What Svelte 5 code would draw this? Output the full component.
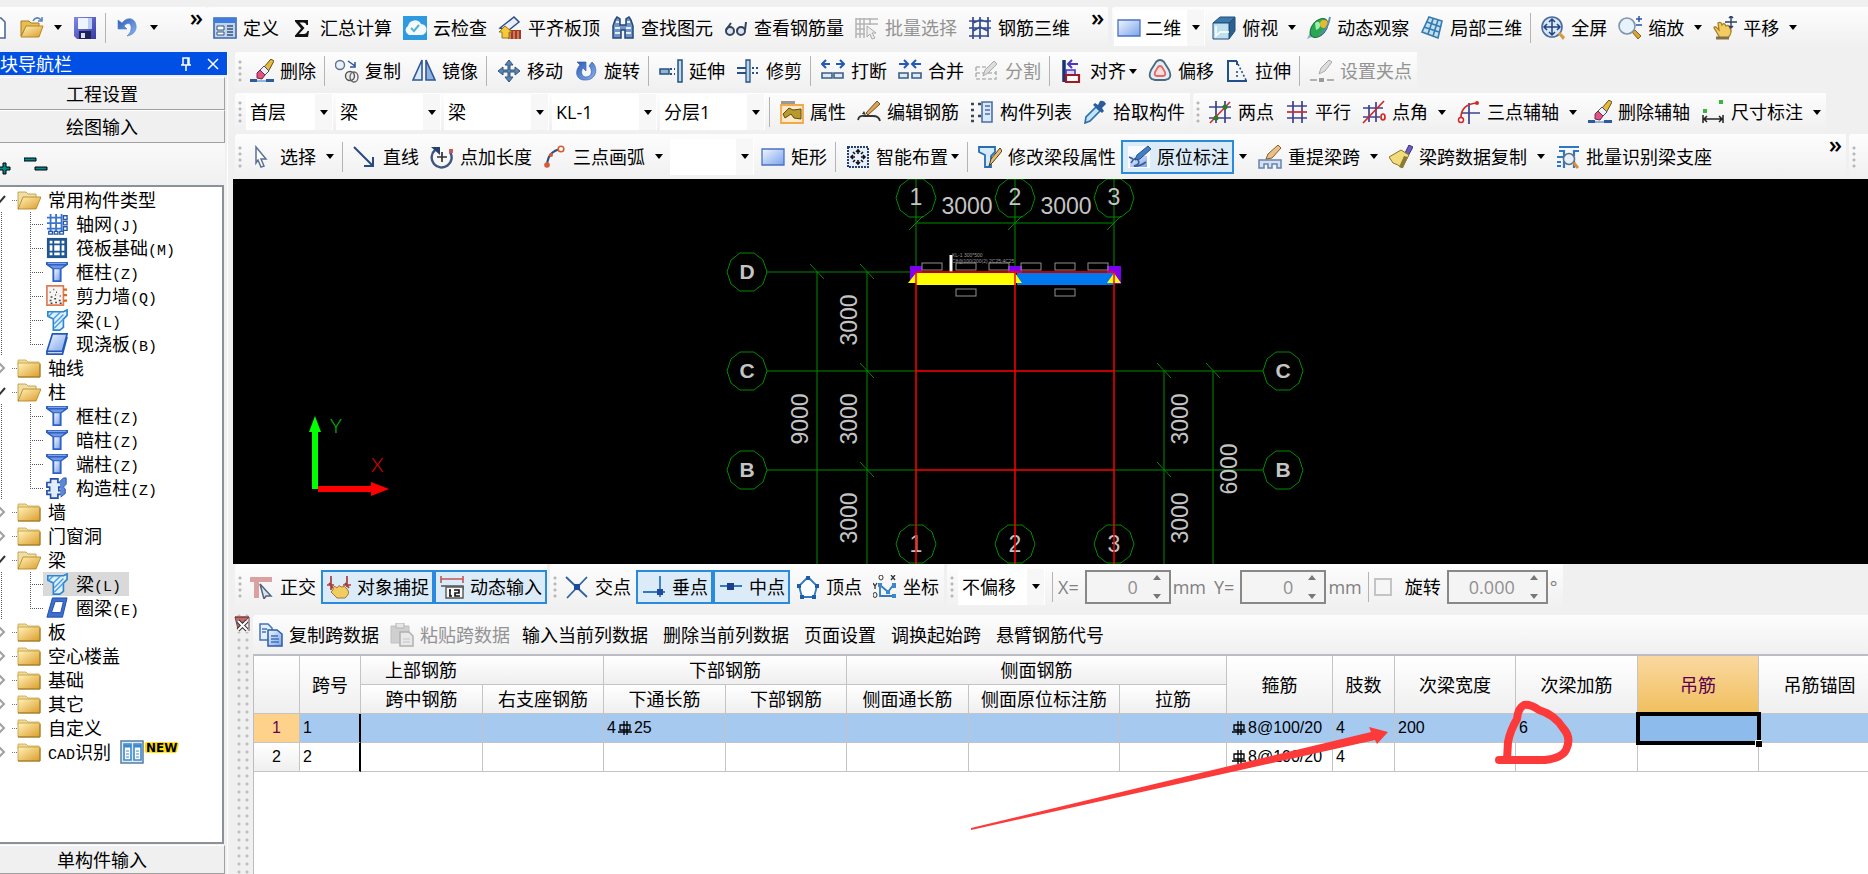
<script>
  // icons are drawn on a 24x24 board, keyed by name
  const icons = {
    doc: '<path d="M5 2h11l4 4v16H5z" fill="#fff" stroke="#4a6a9a" stroke-width="1.6"/>',
    open: '<path d="M1 5h8l2 2h8v4H6L1 20z" fill="#e8bd55" stroke="#a87a1c"/><path d="M6 10h17l-4 11H1z" fill="url(#gold)" stroke="#b8861f"/><path d="M13 5c2-4 6-4 8-1m1-3v4h-4" fill="none" stroke="#5c86b8" stroke-width="1.6"/>',
    save: '<path d="M1 1h22v22H4l-3-3z" fill="url(#violet)"/><path d="M5 2h14v11H5z" fill="#eef4ff"/><path d="M15 2h4v11h-4z" fill="#b9cdf2"/><path d="M6 15h12v8H6z" fill="#1f2356"/><path d="M8 17h4v5H8z" fill="#d8dcf0"/>',
    undo: '<path d="M2 4v9h9l-3-3c4-5 8-2 7 3 0 3-2 5-4 7 6-1 10-5 9-11C19 2 11 0 6 7z" fill="url(#blue)" stroke="#4a7fd0" stroke-width=".6"/>',
    define: '<path d="M1 2h22v20H1z" fill="#c3d3e8" stroke="#3a68ad" stroke-width="1.6"/><path d="M1 2h22v5H1z" fill="#3f7ce0"/><path d="M4 10h7v4H4zm0 6h7v3H4z" fill="#fff" stroke="#31557f"/><path d="M14 10h6m-6 3h6m-6 3h6m-6 3h6" stroke="#31557f" stroke-width="1.4"/>',
    sum: '<path d="M5 4h13v5h-1.500q-.5-2.500-3-2.500h-4l5 5.500-5.500 6h5q2.500 0 3.500-3H19l-1 6H5v-1.500L11 12.500 5 5.500z" fill="#111"/>',
    cloud: '<path d="M0 0h24v24H0z" fill="#2f9ae0"/><path d="M6 19a5 5 0 0 1-1-9 7 7 0 0 1 13-2 5.500 5.500 0 0 1 0 11z" fill="#f2fafc"/><path d="M8 12l3 3 5-6" fill="none" stroke="#59b2ce" stroke-width="2"/>',
    slabTop: '<path d="M2 12L16 1l5 5-10 8z" fill="#e8eef8" stroke="#2d4d86" stroke-width="1.500"/><path d="M10 14h13v9H10z" fill="#a23a22"/><path d="M12 15v8m4-8v8m4-8v8" stroke="#f3b8a0"/><path d="M7 10l7 6h-3v6H4v-6H1z" fill="#f5c93c" stroke="#9a7413"/>',
    binocular: '<path d="M2 10l2-6 2-3 3 2v6h6V3l3-2 2 3 2 6v12h-8v-8h-4v8H2z" fill="#6f95c6" stroke="#244677" stroke-width="1.500"/><path d="M4 12h5m6 0h5M5 6h3m8 0h3M4 17h5m6 0h5" stroke="#e4eefb" stroke-width="1.800"/>',
    glasses: '<g fill="#dce3ee" stroke="#33425d" stroke-width="2"><circle cx="6" cy="15" r="4"/><circle cx="17" cy="15" r="4"/><path d="M2 14L7 7m6 7l1-1m7 1l1-8" fill="none"/></g>',
    batch: '<path d="M1 2v20M5 2v20M9 2v20M1 3h22M1 8h22M1 13h9M1 18h9M15 2v7" fill="none" stroke="#b4b4b4" stroke-width="1.500"/><path d="M12 10l9 7h-4l3 5-3 1-2-5-3 3z" fill="#eee" stroke="#aaa"/>',
    rebar3d: '<path d="M5 1v22M12 1v22M20 1v20M1 5h22M1 12h22M1 20h20M5 7L12 4l8 2M5 15l7-4 8 4" fill="none" stroke="#334b8f" stroke-width="1.700"/>',
    rect: '<path d="M1 4h22v16H1z" fill="url(#sky)" stroke="#4a70c4" stroke-width="1.300"/>',
    cube: '<path d="M1 7L8 1h15l-6 6z" fill="#3c7aab" stroke="#1e4f7b"/><path d="M17 7l6-6v14l-6 8z" fill="#2c608f" stroke="#1e4f7b"/><path d="M1 7h16v16H1z" fill="#bfe0ef" stroke="#1e4f7b"/><path d="M4 10v10l4-4h9" fill="none" stroke="#fff" stroke-width="1.500"/>',
    orbit: '<path d="M0 23l4-9 6 5z" fill="#8fb0cc"/><ellipse cx="12" cy="12" rx="7" ry="11" transform="rotate(40 12 12)" fill="#2aa851" stroke="#14713a"/><path d="M8 7q4-3 5 1t-4 6z" fill="#9cf0ae"/><circle cx="17" cy="8" r="4" fill="#e8b92c"/><path d="M12 19q9-5 11-18" fill="none" stroke="#5c88b0" stroke-width="1.800"/>',
    local3d: '<path d="M9 1l13 4-4 17-16-6z" fill="#c2e0f4" stroke="#3579ad" stroke-width="1.600"/><path d="M7 6l14 5M4 11l15 5M13 3L8 18M18 4l-5 16" fill="none" stroke="#3579ad" stroke-width="1.600"/>',
    full: '<circle cx="11" cy="11" r="10" fill="#d7e8fb" stroke="#4c6b9c" stroke-width="1.600"/><path d="M11 3v16M3 11h16M8 6l3-3 3 3M8 16l3 3 3-3M6 8l-3 3 3 3M16 8l3 3-3 3" fill="none" stroke="#23407f" stroke-width="1.500"/><path d="M17 18l2-2 5 5-2 3z" fill="#d99a3a"/>',
    zoom: '<path d="M14 16l3-2 6 6-3 3z" fill="#d9a13a" stroke="#8a6318"/><circle cx="9" cy="10" r="8" fill="#e6f2fc" stroke="#7e94ad" stroke-width="1.600"/><path d="M18 3h6M21 0v6M18 9h6" stroke="#2c53a5" stroke-width="1.500"/>',
    pan: '<path d="M3 15q-4-5 0-4l3 3-1-7q3-2 4 2 2-3 4 1 3-2 4 2 3 4-2 10H7z" fill="#f2cb63" stroke="#a97d26" stroke-width="1.300"/><path d="M3 22h13" stroke="#857045" stroke-width="3"/><path d="M18 0v12M12 6h12M16 2l2-2 2 2M16 10l2 2 2-2" fill="none" stroke="#2c3e66" stroke-width="1.400"/>',
    erase: '<path d="M0 20h7v3H0zM16 20h8v3h-8z" fill="#2e5c98"/><path d="M7 22h9" stroke="#8fb4de" stroke-width="2"/><path d="M14 8l7-8 3 2-6 11z" fill="#e5b83e" stroke="#684d17"/><path d="M10 11l4-4 5 5-4 4z" fill="#edf1f7" stroke="#444f66"/><path d="M7 14l3-3 5 5-3 4-5-1z" fill="#df5284" stroke="#7a2444"/>',
    copy: '<circle cx="5" cy="6" r="4.500" fill="#eaf1fb" stroke="#5c7291" stroke-width="1.400"/><circle cx="15" cy="17" r="4.500" fill="#eee" stroke="#555" stroke-width="1.400"/><ellipse cx="19" cy="18" rx="4" ry="5" fill="none" stroke="#666" stroke-width="1.400"/><path d="M13 2l7 5m0-4v5h-5" fill="none" stroke="#2b50a0" stroke-width="1.500"/>',
    mirror: '<path d="M10 1v20H1z" fill="#dbe8fa" stroke="#2d5797" stroke-width="1.600"/><path d="M14 1v20h9z" fill="#8fb1df" stroke="#2d5797" stroke-width="1.600"/>',
    move: '<path d="M12 1l4 5h-3v5h5V8l5 4-5 4v-3h-5v5h3l-4 5-4-5h3v-5H6v3l-5-4 5-4v3h5V6H8z" fill="#5d84ad" stroke="#2e5580"/>',
    rotate: '<path d="M3 3h9v9l-3-3c-3 4-1 9 3 9 6 0 7-7 3-11l3-4c7 6 4 18-6 18C2 22 0 12 6 6z" fill="url(#blue)" stroke="#2c56a8" stroke-width=".6"/>',
    extend: '<path d="M1 10h9v5H1z" fill="#8fb6d9" stroke="#265180" stroke-width="1.500"/><path d="M11 10h5m-5 5h5" stroke="#265180" stroke-width="2" stroke-dasharray="2 2"/><path d="M19 1h4v22h-4z" fill="#c3daee" stroke="#265180" stroke-width="1.500"/>',
    trim: '<path d="M1 9h9m-9 5h9" stroke="#265180" stroke-width="2"/><path d="M10 1h4v22h-4z" fill="#b9d3ea" stroke="#265180" stroke-width="1.300"/><path d="M16 9h7m-7 5h7" stroke="#265180" stroke-width="2" stroke-dasharray="2 2"/>',
    split: '<path d="M1 5h8M15 5h8M5 1L1 5l4 4M19 1l4 4-4 4" fill="none" stroke="#2558b8" stroke-width="2"/><path d="M1 14h10v5H1zm12 0h9v5h-9z" fill="#dfeaf6" stroke="#3a5f86" stroke-width="1.600"/>',
    join: '<path d="M1 5h8M15 5h8M6 1l4 4-4 4M18 1l-4 4 4 4" fill="none" stroke="#2558b8" stroke-width="2"/><path d="M1 14h9v5H1zm13 0h9v5h-9z" fill="#dfeaf6" stroke="#3a5f86" stroke-width="1.600"/>',
    cut: '<path d="M1 8h12M1 8v12h20v-8M1 14h20" fill="none" stroke="#b5b5b5" stroke-width="1.600" stroke-dasharray="4 2"/><path d="M8 17l2-6 9-9 3 3-9 9z" fill="#ddd" stroke="#aaa"/>',
    align: '<path d="M4 1v22" stroke="#17366f" stroke-width="3.500"/><path d="M8 5h10M12 1L8 5l4 4" fill="none" stroke="#4838c0" stroke-width="2"/><path d="M6 11h9v5H6z" fill="#dcd6ff" stroke="#4838c0" stroke-width="1.600"/><path d="M6 16h13v7H6z" fill="#fff" stroke="#a01a26" stroke-width="2.200"/>',
    offset: '<path d="M8 3q4-4 8 0l5 8q4 9-4 10H7q-8-1-4-10z" fill="#e4edf2" stroke="#496a80" stroke-width="1.800"/><path d="M10 8q2-2 4 0l3 5q1 4-2 4H9q-3 0-2-4z" fill="#fbdada" stroke="#e06a6a" stroke-width="1.800"/>',
    stretch: '<path d="M12 2H3v20h10M12 2v4" fill="none" stroke="#204f8c" stroke-width="2"/><path d="M13 5l8 16M12 12v8" stroke="#204f8c" stroke-width="1.600" stroke-dasharray="2 2"/><path d="M12 22h10" stroke="#204f8c" stroke-width="2"/>',
    grip: '<path d="M0 21h7m10 0h7" stroke="#b0b0b0" stroke-width="2"/><path d="M9 19h5v4H9z" fill="#999"/><path d="M9 15l2-6 8-8 3 2-7 9z" fill="#ddd" stroke="#aaa"/>',
    props: '<path d="M1 1h14v4H1z" fill="#999"/><path d="M1 5h22v18H1z" fill="#ffe9c8" stroke="#f0a848" stroke-width="1.800"/><path d="M3 14l6-6 4 2 8-1v10l-7-1-3-4-6 4z" fill="#b79a2c" stroke="#5c4b12"/>',
    editBar: '<path d="M1 20q1-5 6-4h9q6 0 7 5" fill="none" stroke="#333" stroke-width="1.800"/><path d="M9 15l-4-1 2-3z" fill="#333"/><path d="M9 13L20 1l3 3-12 11z" fill="#d8a35a" stroke="#7a4c1b"/>',
    list: '<path d="M1 4h4m-4 6h4m-4 6h4m-4 5h4M8 4h3M8 16h3" stroke="#3c4858" stroke-width="2.400" stroke-dasharray="3 2"/><path d="M12 2h10v20H12z" fill="#dbe8fa" stroke="#4a6fa8" stroke-width="1.600"/><path d="M15 6h5m-5 4h5m-5 4h5" stroke="#4a6fa8" stroke-width="1.500"/>',
    pick: '<path d="M2 23l1-6L13 7l4 4-10 10z" fill="#bfe4fa" stroke="#2d6da8" stroke-width="1.600"/><path d="M10 5l2-2 3 2 2-4q4-1 6 3l-4 4 2 3-2 2z" fill="#2b5d9c"/>',
    twoPoint: '<path d="M8 1v22M17 1v22M1 7h22M1 18h22" stroke="#3d4290" stroke-width="1.700"/><path d="M2 23L22 2" stroke="#d02828" stroke-width="1.500"/><circle cx="8" cy="18" r="2.500" fill="#2e7d1c"/><circle cx="17" cy="7" r="2.500" fill="#2e7d1c"/>',
    parallel: '<path d="M8 1v22M17 1v22M2 6h20M2 18h20" stroke="#3d4290" stroke-width="1.700"/><path d="M2 12h20" stroke="#d02828" stroke-width="1.700"/>',
    angle: '<path d="M7 5v17M14 2v20M1 8h20M1 17h17" stroke="#3d4290" stroke-width="1.700"/><path d="M1 23L22 1" stroke="#d02828" stroke-width="1.700"/><ellipse cx="21" cy="17" rx="2" ry="3" fill="none" stroke="#d02828" stroke-width="1.700"/>',
    arcAxis: '<path d="M12 3v21M4 13h19" stroke="#3d4290" stroke-width="1.700"/><path d="M4 18Q4 4 20 3" fill="none" stroke="#d02828" stroke-width="1.700"/><circle cx="4" cy="20" r="2.500" fill="#fff" stroke="#d02828" stroke-width="1.500"/><circle cx="20" cy="3" r="2" fill="#d02828"/>',
    dim: '<path d="M2 9h4v4H2zM18 0h4v4h-4z" fill="#37b83c"/><path d="M2 15v8m20-8v8M2 19h20M6 16l-3 3 3 3M18 16l3 3-3 3" fill="none" stroke="#222" stroke-width="1.500"/>',
    cursor: '<path d="M6 2l10 12h-5l3 7-3 1-3-7-2 3z" fill="#fff" stroke="#5a7296" stroke-width="1.500"/>',
    line: '<path d="M1 2l19 19M20 12v9h-9" fill="none" stroke="#274b80" stroke-width="2"/>',
    pointLen: '<path d="M5 5a10 10 0 1 0 15 2" fill="none" stroke="#3d5580" stroke-width="2.400"/><path d="M1 2h9v8z" fill="#26416e"/><path d="M12 7v10M7 12h10" stroke="#333" stroke-width="1.700"/><path d="M19 4h4v4h-4z" fill="#c85a5a"/>',
    arc: '<path d="M4 20Q5 6 18 4" fill="none" stroke="#2f4f86" stroke-width="2.200"/><circle cx="4" cy="20" r="2.800" fill="#d85a32"/><circle cx="18" cy="4" r="2.800" fill="#fff" stroke="#d85a32" stroke-width="1.600"/><circle cx="8" cy="10" r="2" fill="#d85a32"/>',
    smart: '<path d="M2 2h20v20H2z" fill="#e7eefb" stroke="#26416e" stroke-width="2" stroke-dasharray="2 1"/><path d="M12 5v4m0 6v4M5 12h4m6 0h4M10 7l2-2 2 2M10 17l2 2 2-2M7 10l-2 2 2 2M17 10l2 2-2 2M7 7l2 2m8-2l-2 2M7 17l2-2m8 2l-2-2" fill="none" stroke="#111" stroke-width="1.600"/>',
    beamEdit: '<path d="M1 2h16v5l-4 4v11H7V10L1 7z" fill="#d4ebfb" stroke="#2b6cb0" stroke-width="1.800"/><path d="M11 21l2-7 9-11 2 3-9 11z" fill="#e8c070" stroke="#513b1c"/>',
    inplace: '<path d="M1 1h22v22H1z" fill="#f7fbff"/><path d="M3 11h17v11H3z" fill="url(#sky)"/><path d="M2 12l4 2m-2 4q4-7 7-3t-4 6q5 1 12-4" fill="none" stroke="#3c5d96" stroke-width="1.600"/><path d="M8 15l2-5L21 1l3 3-11 10z" fill="#457cc4" stroke="#22508c"/>',
    respan: '<path d="M1 23v-8h22v8h-4v-4h-5v4h-4v-4H6v4z" fill="#d5e1f2" stroke="#6482b0" stroke-width="1.500"/><path d="M8 14l2-5L20 0l3 3-9 10z" fill="#e7c08a" stroke="#8a5d2a"/>',
    brush: '<path d="M16 8l4-8 4 2-5 9z" fill="#6a5fc0" stroke="#37307c"/><path d="M0 12L12 5l8 5-7 13-4-3-5-2z" fill="#f0dc7a" stroke="#8c7426"/><path d="M10 22l5-11 4 1-5 11z" fill="#8a7b35"/>',
    recog: '<path d="M3 2h20M3 6h5v5M23 6h-5v5M1 12h7v11M1 17h4M18 14v9M1 21h4" fill="none" stroke="#2f77c4" stroke-width="2.200"/><circle cx="13" cy="14" r="5.500" fill="#e6f0fb" stroke="#5c6f88" stroke-width="1.500"/><path d="M16 18l3-1 4 5-2 2z" fill="#d98f35"/>',
    ortho: '<path d="M0 2h22v5H9v16H4V7H0z" fill="#dba0a0"/><path d="M10 9l11 12h-5l-2 3z" fill="#dce4ee" stroke="#51647e" stroke-width="1.500"/>',
    snap: '<path d="M4 1v14M20 1v11M0 10h7m9 0h8M2 8l4 5M18 8l4 5" stroke="#a83c3c" stroke-width="1.700"/><path d="M6 15q0-6 4-2 2-4 4-1 4-2 6 2 4 4-2 9H10l-6-6z" fill="#f0cc62" stroke="#9f7a28"/>',
    dyn: '<path d="M1 1v7m22-7v7M1 4h22" stroke="#c05858" stroke-width="1.600"/><path d="M1 11h22v4" fill="none" stroke="#555" stroke-width="1.500"/><path d="M6 12h17v11H6z" fill="#f8f8f8" stroke="#555" stroke-width="1.400"/><path d="M10 15v6m-1-6h2m-2 6h3M14 15h5v3h-4v3h5" fill="none" stroke="#111" stroke-width="1.600"/>',
    cross: '<path d="M1 2l21 20M22 2L2 23" stroke="#2d62a0" stroke-width="1.800"/><path d="M9 9h6v6H9z" fill="#1d49a0"/>',
    perp: '<path d="M18 1v21M1 17h22" stroke="#2f7ac0" stroke-width="1.800"/><path d="M15 14h6v6h-6z" fill="#1d49a0"/>',
    mid: '<path d="M1 11h22" stroke="#2f7ac0" stroke-width="2"/><path d="M8 8h7v7H8z" fill="#1d3f90"/>',
    vertex: '<path d="M12 2l9 9-3 11H6L3 11z" fill="#fff" stroke="#2f7ac0" stroke-width="1.800"/><path d="M10 1h4v4h-4zM1 9h4v4H1zm18 0h4v4h-4zM4 20h4v4H4zm12 0h4v4h-4z" fill="#1f5ca8"/>',
    coord: '<path d="M7 8v13h15M7 10l8 7 6-8" fill="none" stroke="#2f7ac0" stroke-width="1.800"/><path d="M5 8h4v4H5zm14 0h4v5h-4zM13 15h4v4h-4zM19 19h4v4h-4z" fill="#3c86cc"/><path d="M0 8l2 3 2-3M2 11v3M18 0l4 5m0-5l-4 5" fill="none" stroke="#333" stroke-width="1.300"/><ellipse cx="8" cy="2.500" rx="2" ry="2.500" fill="none" stroke="#333"/><ellipse cx="2" cy="20" rx="2" ry="2.500" fill="none" stroke="#333"/>',
    copySpan: '<path d="M1 1h8l4 4v12H1z" fill="#e4effc" stroke="#4472b8" stroke-width="1.500"/><path d="M9 7h9l5 4v12H9z" fill="url(#sky)" stroke="#2c5ba8" stroke-width="1.500"/><path d="M12 13h7m-7 3h8m-8 3h8M3 6h5M3 9h4" stroke="#4472b8" stroke-width="1.300"/>',
    pasteSpan: '<path d="M1 3h18v17H1z" fill="#cfcfcf" stroke="#c0c0c0"/><path d="M6 0h8v5H6z" fill="#e6e6e6" stroke="#b4b4b4"/><path d="M10 9h9l4 4v10H10z" fill="#e8e8e8" stroke="#b0b0b0" stroke-width="1.500"/><path d="M13 16h7m-7 3h7" stroke="#c4c4c4"/>',
    folder: '<path d="M1 4h8l2 2h11v3H1z" fill="#efdc9c" stroke="#c9a64a" stroke-width=".8"/><path d="M1 7h22v14H1z" fill="url(#gold)" stroke="#c39a38" stroke-width=".8"/><path d="M1 21h22V8" fill="none" stroke="#97701c"/>',
    folderOpen: '<path d="M1 4h8l2 2h8v5H6L2 21H1z" fill="#f0dfa4" stroke="#b8953c" stroke-width=".8"/><path d="M6 9h18l-5 12H1z" fill="url(#gold)" stroke="#b07d18" stroke-width=".8"/>',
    axis: '<path d="M5 1v19M11 1v19M17 1v19M1 5h16M1 11h16M1 17h16" stroke="#3d74cf" stroke-width="2"/><path d="M19 3h4v4h-4zm0 6h4v4h-4zm0 6h4v4h-4zM3 20h4v3H3zm6 0h4v3H9zm6 0h4v3h-4z" fill="#fff" stroke="#2458a8" stroke-width="1.500"/>',
    raft: '<path d="M1 1h22v22H1z" fill="#1f5692"/><path d="M4 4h3v3H4zm5 0h6v3H9zm8 0h3v3h-3zM4 9h3v6H4zm13 0h3v6h-3zM4 17h3v3H4zm5 0h6v3H9zm8 0h3v3h-3zM9 9h6v6H9z" fill="#fff"/>',
    column: '<path d="M0 1h24v3l-7 5v14H7V9L0 4z" fill="#2f5fc2"/><path d="M2 2h20v1H2z" fill="#9dbcf2"/><path d="M4 5h16l-4 3H8z" fill="#6f97e4"/><path d="M9 9h6v12H9z" fill="url(#sky)"/>',
    wall: '<path d="M1 1h18v21H1z" fill="#f6f4f2" stroke="#dd7b55" stroke-width="1.800"/><path d="M4 8h1m3-3h1m1 6h1M5 13h2m4-5h1m3 4h1M4 17h2m3-2h2m3 2h2M5 20h2m3-1h2m3 1h2" stroke="#444" stroke-width="1.600"/><path d="M19 5h4m-4 6h4m-4 6h4" stroke="#d86a20" stroke-width="2.400"/>',
    beam: '<path d="M2 3h17l4-2v6l-4 4v9l-4 3H8V11L2 8z" fill="#dff0fd" stroke="#2a86cf" stroke-width="1.800"/><path d="M3 8l5-5M8 11l8-8M9 16l10-10M9 21l10-10" stroke="#4a9de0" stroke-width="1.500"/>',
    slab: '<path d="M7 1h16l-5 19H1z" fill="url(#sky)" stroke="#2458b8" stroke-width="1.800"/><path d="M1 20v3h17l5-19" fill="none" stroke="#2458b8" stroke-width="1.800"/>',
    ring: '<path d="M7 1h16l-5 21H1z" fill="#3c70d0" stroke="#1f48a8"/><path d="M10 5h9l-3 12H6z" fill="#fff" stroke="#1f48a8"/>',
    tie: '<path d="M5 2h8v4h4v5h-3v4h3v4h-4v4H5v-4H1v-4h3v-4H1V6h4z" fill="#e2edfb" stroke="#2450a8" stroke-width="1.800"/><path d="M15 5l4-4h3v7l-3 3 2 2v5l-5 4" fill="#5c88d8" stroke="#2450a8"/>',
    cad: '<path d="M1 1h22v22H1z" fill="#d9ecfb" stroke="#5a7c9c" stroke-width="1.500"/><path d="M4 4h7v16H4zm10 0h7v16h-7z" fill="#fff" stroke="#3d88cc" stroke-width="1.600"/><path d="M4 6h7m3 0h7" stroke="#3d88cc" stroke-width="3"/><path d="M6 11h3m-3 3h3m-3 3h3m7-6h3m-3 3h3m-3 3h3" stroke="#3d88cc"/>'
  }

  const fileBar = [{ icon: 'doc', title: '新建' }, { icon: 'open', title: '打开', split: true }, { icon: 'save', title: '保存' }, 'sep', { icon: 'undo', title: '撤销', split: true }]
  const buildBar = [
    { icon: 'define', label: '定义' }, { icon: 'sum', label: '汇总计算' }, { icon: 'cloud', label: '云检查' },
    { icon: 'slabTop', label: '平齐板顶' }, { icon: 'binocular', label: '查找图元' }, { icon: 'glasses', label: '查看钢筋量' },
    { icon: 'batch', label: '批量选择', off: true }, { icon: 'rebar3d', label: '钢筋三维' }
  ]
  const viewBar = [
    { icon: 'cube', label: '俯视', split: true }, { icon: 'orbit', label: '动态观察' }, { icon: 'local3d', label: '局部三维' }, 'sep',
    { icon: 'full', label: '全屏' }, { icon: 'zoom', label: '缩放', split: true }, { icon: 'pan', label: '平移', split: true }
  ]
  const editBar = [
    { icon: 'erase', label: '删除' }, 'sep', { icon: 'copy', label: '复制' }, { icon: 'mirror', label: '镜像' }, 'sep',
    { icon: 'move', label: '移动' }, { icon: 'rotate', label: '旋转' }, 'sep', { icon: 'extend', label: '延伸' }, { icon: 'trim', label: '修剪' }, 'sep',
    { icon: 'split', label: '打断' }, { icon: 'join', label: '合并' }, { icon: 'cut', label: '分割', off: true }, 'sep',
    { icon: 'align', label: '对齐', menu: true }, { icon: 'offset', label: '偏移' }, { icon: 'stretch', label: '拉伸' }, 'sep',
    { icon: 'grip', label: '设置夹点', off: true }
  ]
  const memberBar = [
    { combo: '首层', name: '楼层', w: 87 }, { combo: '梁', name: '构件大类', w: 105 }, { combo: '梁', name: '构件类型', w: 105 },
    { combo: 'KL-1', name: '构件', w: 105 }, { combo: '分层1', name: '分层', w: 105 }, 'sep',
    { icon: 'props', label: '属性' }, { icon: 'editBar', label: '编辑钢筋' }, { icon: 'list', label: '构件列表' }, { icon: 'pick', label: '拾取构件' }
  ]
  const axisBar = [
    { icon: 'twoPoint', label: '两点' }, { icon: 'parallel', label: '平行' }, { icon: 'angle', label: '点角', split: true },
    { icon: 'arcAxis', label: '三点辅轴', split: true }, { icon: 'erase', label: '删除辅轴' }, { icon: 'dim', label: '尺寸标注', split: true }
  ]
  const drawBar = [
    { icon: 'cursor', label: '选择', split: true }, 'sep', { icon: 'line', label: '直线' }, { icon: 'pointLen', label: '点加长度' },
    { icon: 'arc', label: '三点画弧', split: true }, { combo: '', name: '弧参数', w: 84 }, { icon: 'rect', label: '矩形' }, 'sep',
    { icon: 'smart', label: '智能布置', menu: true }, 'sep', { icon: 'beamEdit', label: '修改梁段属性' },
    { icon: 'inplace', label: '原位标注', on: true, split: true }, { icon: 'respan', label: '重提梁跨', split: true },
    { icon: 'brush', label: '梁跨数据复制', split: true }, { icon: 'recog', label: '批量识别梁支座' }
  ]
  const modeBar = [{ icon: 'ortho', label: '正交' }, { icon: 'snap', label: '对象捕捉', on: true }, { icon: 'dyn', label: '动态输入', on: true }]
  const snapBar = [
    { icon: 'cross', label: '交点' }, { icon: 'perp', label: '垂点', on: true }, { icon: 'mid', label: '中点', on: true },
    { icon: 'vertex', label: '顶点' }, { icon: 'coord', label: '坐标' }
  ]
  const spanBar = [
    { icon: 'copySpan', label: '复制跨数据' }, { icon: 'pasteSpan', label: '粘贴跨数据', off: true }, { label: '输入当前列数据' },
    { label: '删除当前列数据' }, { label: '页面设置' }, { label: '调换起始跨' }, { label: '悬臂钢筋代号' }
  ]

  const tree = [
    { label: '常用构件类型', items: [
      { icon: 'axis', label: '轴网', key: 'J' }, { icon: 'raft', label: '筏板基础', key: 'M' }, { icon: 'column', label: '框柱', key: 'Z' },
      { icon: 'wall', label: '剪力墙', key: 'Q' }, { icon: 'beam', label: '梁', key: 'L' }, { icon: 'slab', label: '现浇板', key: 'B' }
    ] },
    { label: '轴线' },
    { label: '柱', items: [
      { icon: 'column', label: '框柱', key: 'Z' }, { icon: 'column', label: '暗柱', key: 'Z' },
      { icon: 'column', label: '端柱', key: 'Z' }, { icon: 'tie', label: '构造柱', key: 'Z' }
    ] },
    { label: '墙' },
    { label: '门窗洞' },
    { label: '梁', items: [{ icon: 'beam', label: '梁', key: 'L', selected: true }, { icon: 'ring', label: '圈梁', key: 'E' }] },
    { label: '板' }, { label: '空心楼盖' }, { label: '基础' }, { label: '其它' }, { label: '自定义' },
    { latin: 'CAD', label: '识别', isNew: true }
  ]

  // drawing: axis positions
  const cols = [683, 782, 881]
  const rows = [{ n: 'D', y: 93 }, { n: 'C', y: 192 }, { n: 'B', y: 291 }]
  const bubble = '-7,-19 7,-19 16,-12 20,0 16,12 7,19 -7,19 -16,12 -20,0 -16,-12'
  const ticks = [[584, 93], [634, 93], [634, 192], [634, 291], [931, 192], [931, 291], [980, 192]]
  const dims = [['3000', 616, 141], ['3000', 616, 240], ['3000', 616, 339], ['9000', 567, 240], ['3000', 947, 240], ['3000', 947, 339], ['6000', 996, 290]]
  const boxes = [[689, 84], [723, 84], [756, 84], [788, 84], [822, 84], [855, 84], [723, 110], [822, 110]]

  const widths = [46, 61, 122, 121, 122, 121, 122, 151, 107, 106, 62, 121, 122, 121, 122]
  const spans = [
    { no: '1', bottom: '25', count: '4', stirrup: '8@100/20', legs: '4', width: '200', extra: '6' },
    { no: '2', stirrup: '8@100/20', legs: '4' }
  ]
</script>

{#snippet glyph(name)}
  <svg class="ico" viewBox="0 0 24 24" aria-hidden="true">{@html icons[name]}</svg>
{/snippet}

{#snippet caret()}
  <svg class="caret" viewBox="0 0 8 5" aria-hidden="true"><path d="M0 0h8L4 5z" /></svg>
{/snippet}

{#snippet combo(value, name, w)}
  <div class="combo" style="width:{w}px">
    <select aria-label={name}><option>{value}</option></select>
    <span class="drop">{@render caret()}</span>
  </div>
{/snippet}

{#snippet bar(items)}
  {#each items as it}
    {#if it === 'sep'}
      <i class="sep"></i>
    {:else if it.combo !== undefined}
      {@render combo(it.combo, it.name, it.w)}
    {:else}
      <button class="tb" class:on={it.on} class:plain={!it.icon} disabled={it.off} aria-label={it.title}>
        {#if it.icon}{@render glyph(it.icon)}{/if}
        {#if it.label}<span>{it.label}</span>{/if}
        {#if it.menu}<span class="menu">{@render caret()}</span>{/if}
      </button>
      {#if it.split}
        <button class="split" aria-label="更多">{@render caret()}</button>
      {/if}
    {/if}
  {/each}
{/snippet}

{#snippet spin(id, value, w)}
  <div class="spin" style="width:{w}px">
    <input {id} type="text" inputmode="decimal" {value} />
    <svg viewBox="0 0 8 24" aria-hidden="true"><path d="M0 5h8L4 0zM0 19h8l-4 5z" /></svg>
  </div>
{/snippet}

{#snippet rebar()}
  <svg class="rebar" viewBox="0 0 14 16" aria-label="Φ"><path d="M2 5h10v5H2zM6 1v14M9 1v14M0 12h14" /></svg>
{/snippet}

<svg class="defs" aria-hidden="true">
  <defs>
    <linearGradient id="gold" x1="0" y1="0" x2="1" y2="1"><stop offset="0" stop-color="#fff3bc" /><stop offset="1" stop-color="#dc9c28" /></linearGradient>
    <linearGradient id="sky" x1="0" y1="0" x2="1" y2="1"><stop offset="0" stop-color="#f0f6ff" /><stop offset="1" stop-color="#7ba3ea" /></linearGradient>
    <linearGradient id="blue" x1="0" y1="0" x2="1" y2="1"><stop offset="0" stop-color="#2f5cb8" /><stop offset="1" stop-color="#8ab4ee" /></linearGradient>
    <linearGradient id="violet" x1="0" y1="0" x2="1" y2="1"><stop offset="0" stop-color="#8288e8" /><stop offset="1" stop-color="#343aa0" /></linearGradient>
  </defs>
</svg>

<div class="app">
  <header>
    <div class="strip file">{@render bar(fileBar)}<button class="more" aria-label="更多">»</button></div>
    <div class="strip">{@render bar(buildBar)}<button class="more" aria-label="更多">»</button></div>
    <div class="strip grow">
      <div class="combo view">
        {@render glyph('rect')}
        <select aria-label="视图"><option>二维</option></select>
        <span class="drop">{@render caret()}</span>
      </div>
      {@render bar(viewBar)}
    </div>
  </header>

  <div class="body">
    <aside>
      <div class="title">
        <span>块导航栏</span>
        <button aria-label="固定"><svg viewBox="0 0 12 14"><path d="M3 1h6v7H3zM8 1v7M1 8h10M6 8v6" /></svg></button>
        <button aria-label="关闭"><svg viewBox="0 0 12 14"><path d="M1 2l10 10M11 2L1 12" /></svg></button>
      </div>
      <button class="nav">工程设置</button>
      <button class="nav">绘图输入</button>
      <div class="expand">
        <button aria-label="展开"><svg viewBox="0 0 24 20"><path d="M0 2h10v3H0zM15 7h3v4h4v3h-4v4h-3v-4h-4v-3h4z" /></svg></button>
        <button aria-label="折叠"><svg viewBox="0 0 24 20"><path d="M0 2h12v3H0zM11 11h12v3H11z" /></svg></button>
      </div>
      <ul class="tree">
        {#each tree as group}
          <li class="row">
            <svg class="chev" class:open={group.items} viewBox="0 0 12 12"><path d={group.items ? 'M0 4l5 5 6-7' : 'M5 1l5 5-5 5'} /></svg>
            <i class="dots"></i>
            {@render glyph(group.items ? 'folderOpen' : 'folder')}
            <span class="name">{#if group.latin}<span class="key">{group.latin}</span>{/if}{group.label}</span>
            {#if group.isNew}{@render glyph('cad')}<b class="new">NEW</b>{/if}
          </li>
          {#each group.items ?? [] as item, i}
            <li class="row">
              <svg class="branch" viewBox="0 0 43 24"><path d="M1.500 0v24M30.500 0v{i === group.items.length - 1 ? 12 : 24}M30 12.500h13" /></svg>
              <span class="leaf" class:selected={item.selected}>
                {@render glyph(item.icon)}
                <span>{item.label}<span class="key">({item.key})</span></span>
              </span>
            </li>
          {/each}
        {/each}
      </ul>
      <button class="nav last">单构件输入</button>
    </aside>

    <main>
      <div class="line">
        <div class="strip gripped">{@render bar(editBar)}</div>
      </div>
      <div class="line">
        <div class="strip gripped">{@render bar(memberBar)}</div>
        <div class="strip gripped">{@render bar(axisBar)}</div>
      </div>
      <div class="line tall">
        <div class="strip gripped grow">{@render bar(drawBar)}<button class="more" aria-label="更多">»</button></div>
        <div class="strip gripped rest"></div>
      </div>

      <svg class="canvas" viewBox="0 0 1635 385" preserveAspectRatio="xMinYMin slice">
        <g class="green">
          <path d="M683 44H881M584 93V385M634 93V385M931 192V385M980 192V385M534 93H683M534 192H683M534 291H683M881 192H1030M881 291H1030" />
          {#each cols as x}
            <path d="M{x} 0V93M{x - 7} 51l14-14" />
            <polygon points={bubble} transform="translate({x} 19)" />
            <polygon points={bubble} transform="translate({x} 365)" />
          {/each}
          {#each ticks as [x, y]}<path d="M{x - 7} {y - 8}l14 15" />{/each}
          {#each rows as r, i}
            <polygon points={bubble} transform="translate(514 {r.y})" />
            {#if i > 0}<polygon points={bubble} transform="translate(1050 {r.y})" />{/if}
          {/each}
        </g>
        <g fill="#7d00f0"><path d="M677 87h12v14h-12zM775 87h14v7h-14zM874 87h14v18h-14z" /></g>
        <path d="M683 94h99l7 10h-6v2H683v-2h-8z" fill="#ff0" />
        <path d="M784 94h97v12h-97z" fill="#0078f0" />
        <path d="M782 94l7 10h-7zM881 94l7 10h-14z" fill="#ff0" />
        <g class="boxes">
          {#each boxes as [x, y]}<rect {x} {y} width="20" height="7" />{/each}
        </g>
        <path d="M718 76v17" stroke="#fff" stroke-width="3" />
        <g class="tiny"><text x="719" y="78">KL-1 300*500</text><text x="719" y="84">C8@100/200(2) 2C25;4C25</text></g>
        <g class="cad">
          {#each cols as x, i}
            <text {x} y="26">{i + 1}</text>
            <text {x} y="373">{i + 1}</text>
          {/each}
          {#each rows as r, i}
            <text class="axis" x="514" y={r.y + 7}>{r.n}</text>
            {#if i > 0}<text class="axis" x="1050" y={r.y + 7}>{r.n}</text>{/if}
          {/each}
          <text x="734" y="35">3000</text>
          <text x="833" y="35">3000</text>
          {#each dims as [t, x, y]}<text transform="translate({x + 8} {y}) rotate(-90)">{t}</text>{/each}
        </g>
        <g class="red">
          <path d="M683 93H881M683 192H881M683 291H881" />
          {#each cols as x}<path d="M{x} 93V385" />{/each}
        </g>
        <path d="M85 307h53v-4l18 7-18 7v-4H85z" fill="#f00" />
        <path d="M79 310V253h-3l6-16 6 16h-3v57z" fill="#0f0" />
        <text class="ucs" x="97" y="254" fill="#0c0">Y</text>
        <text class="ucs" x="138" y="293" fill="#e00">X</text>
      </svg>

      <div class="line tall foot">
        <div class="strip gripped">{@render bar(modeBar)}</div>
        <div class="strip gripped">{@render bar(snapBar)}</div>
        <div class="strip gripped values">
          {@render combo('不偏移', '偏移方式', 87)}
          <i class="sep"></i>
          <label for="off-x">X=</label>
          {@render spin('off-x', '0', 86)}
          <span>mm</span>
          <label class="next" for="off-y">Y=</label>
          {@render spin('off-y', '0', 86)}
          <span>mm</span>
          <i class="sep"></i>
          <input id="rot-on" type="checkbox" />
          <label class="turn" for="rot-on">旋转</label>
          {@render spin('rot', '0.000', 101)}
          <span>°</span>
        </div>
      </div>

      <section>
        <div class="gutter">
          <button aria-label="关闭"><svg viewBox="0 0 16 16"><path d="M1 1h14L4 13z" fill="#c06a6a" stroke="#7a3a40" /><path d="M1 1h14v14" stroke="#7a3a40" /><path d="M4 5l9 9M13 5l-9 9" stroke="#333" stroke-width="4" /><path d="M4 5l9 9M13 5l-9 9" stroke="#fff" stroke-width="2" /></svg></button>
        </div>
        <div class="sheet">
          <div class="strip spanbar">{@render bar(spanBar)}</div>
          <div class="scroll">
            <table>
              <colgroup>
                {#each widths as w}<col style="width:{w}px" />{/each}
              </colgroup>
              <thead>
                <tr>
                  <th rowspan="2"></th>
                  <th rowspan="2">跨号</th>
                  <th class="upper" colspan="2">上部钢筋</th>
                  <th colspan="2">下部钢筋</th>
                  <th colspan="3">侧面钢筋</th>
                  <th rowspan="2">箍筋</th>
                  <th rowspan="2">肢数</th>
                  <th rowspan="2">次梁宽度</th>
                  <th rowspan="2">次梁加筋</th>
                  <th rowspan="2" class="hot">吊筋</th>
                  <th rowspan="2">吊筋锚固</th>
                </tr>
                <tr>
                  <th>跨中钢筋</th><th>右支座钢筋</th><th>下通长筋</th><th>下部钢筋</th>
                  <th>侧面通长筋</th><th>侧面原位标注筋</th><th>拉筋</th>
                </tr>
              </thead>
              <tbody>
                {#each spans as s, i}
                  <tr class:current={i === 0}>
                    <th>{s.no}</th>
                    <td class="frozen">{s.no}</td>
                    <td></td>
                    <td></td>
                    <td>{#if s.bottom}{s.count}{@render rebar()}{s.bottom}{/if}</td>
                    <td></td><td></td><td></td><td></td>
                    <td>{@render rebar()}{s.stirrup}</td>
                    <td>{s.legs}</td>
                    <td>{s.width ?? ''}</td>
                    <td>{s.extra ?? ''}</td>
                    <td class:cell={i === 0}></td>
                    <td></td>
                  </tr>
                {/each}
              </tbody>
            </table>
          </div>
        </div>
        <svg class="marks" viewBox="0 0 1400 240" aria-hidden="true">
          <path d="M737 216L1137 120l-2-5 19 5-11 12-2-4L737 218z" fill="#fc3a3a" />
          <path d="M1265 148h46q17-2 21-10 6-12-3-22-8-13-24-18-9-6-15-5-6 3-7 14-7 12-9 23l-1 18" fill="none" stroke="#fc3a3a" stroke-width="8" stroke-linecap="round" stroke-linejoin="round" />
        </svg>
      </section>
    </main>
  </div>
</div>

<style>
  :global(body) { margin: 0; background: #f0f0f0; }
  .app { display: flex; flex-direction: column; height: 100vh; overflow: hidden; background: #f0f0f0; color: #000; font: 18px/24px "Open Sans", "Noto Sans CJK SC", sans-serif; }
  .app *, .app { box-sizing: border-box; }
  .defs { position: absolute; width: 0; height: 0; }
  button { border: 0; background: none; color: inherit; font: inherit; padding: 0; }

  header { display: flex; height: 52px; padding: 7px 0 4px; flex: none; }
  .strip { display: flex; align-items: center; flex: none; background: linear-gradient(#fdfdfd, #f0f0f0); white-space: nowrap; border-radius: 3px 0 0 3px; }
  .file { width: 228px; margin-left: -21px; }
  .grow { flex: 1 1 0; min-width: 0; }
  header .grow { margin-left: 4px; }
  .gripped::before { content: ''; flex: none; width: 9px; height: 24px; background: radial-gradient(circle at 5px 3px, #b8b8b8 1px, transparent 2px) 0 0 / 9px 6px; }
  .tb { display: flex; align-items: center; gap: 6px; height: 34px; padding: 0 5px 0 6px; flex: none; }
  .tb.on { background: #dcebf8; box-shadow: inset 0 0 0 2px #2a8ade; }
  .tb.plain { padding: 0 8px 0 7px; }
  .tb:disabled { color: #939393; }
  .ico { width: 24px; height: 24px; flex: none; }
  .menu { display: flex; margin-left: -3px; }
  .split { display: flex; align-items: center; justify-content: center; width: 18px; height: 34px; flex: none; }
  .caret { width: 8px; height: 5px; display: block; fill: #000; }
  .sep { width: 1px; height: 30px; margin: 0 4px 0 3px; background: #b4b4b4; flex: none; }
  .more { align-self: flex-start; margin-left: auto; padding: 0 4px 0 16px; font-size: 24px; line-height: 20px; font-weight: 600; }

  .combo { position: relative; display: flex; align-items: center; height: 36px; margin: 0 1px 0 2px; background: #fff; flex: none; }
  .combo select { appearance: none; width: 100%; height: 100%; border: 0; padding: 0 18px 0 4px; background: transparent; color: #000; font: inherit; }
  .drop { position: absolute; right: 1px; top: 0; bottom: 0; width: 17px; display: flex; align-items: center; justify-content: center; background: #f7f7f7; pointer-events: none; }
  .combo.view { width: 91px; padding-left: 3px; }

  .body { display: flex; flex: 1; min-height: 0; }
  aside { width: 228px; margin-right: 5px; display: flex; flex-direction: column; flex: none; border-right: 1px solid #fff; }
  .title { display: flex; align-items: center; height: 23px; background: #0050e6; color: #fff; padding-right: 8px; margin-bottom: 2px; }
  .title span { flex: 1; }
  .title button { width: 12px; height: 14px; margin-left: 15px; }
  .title svg { display: block; fill: none; stroke: #fff; stroke-width: 1.5; }
  .nav { height: 33px; padding-right: 20px; border: 1px solid #a0a0a0; border-left: 0; border-top-color: #fff; background: #f0f0f0; margin-right: 2px; }
  .nav.last { height: 29px; }
  .expand { display: flex; gap: 12px; height: 42px; padding: 13px 0 0; margin: 0 2px 0 0; background: linear-gradient(#fafafa, #f0f0f0); }
  .expand button { width: 24px; height: 20px; }
  .expand button:first-child { margin-left: -12px; }
  .expand svg { display: block; fill: #008a8a; stroke: #000; stroke-width: 1; }
  .tree { list-style: none; margin: 0 3px 1px 0; padding: 1px 0 0; flex: 1; overflow: hidden; background: #fff; border: solid #8b9199; border-width: 2px 2px 2px 0; }
  .row { display: flex; align-items: center; height: 24px; white-space: nowrap; }
  .chev { width: 12px; height: 12px; margin-left: -6px; fill: none; stroke: #a0a0a0; stroke-width: 2; }
  .chev.open { stroke: #333; }
  .dots { width: 5px; margin-left: 6px; border-top: 1px dotted #777; }
  .branch { width: 43px; height: 24px; fill: none; stroke: #555; stroke-dasharray: 1 1; }
  .name { margin: 0 9px 0 7px; }
  .key { font: 15px "Liberation Mono", monospace; }
  .leaf { display: flex; align-items: center; gap: 8px; height: 24px; padding: 0 8px 0 3px; }
  .leaf .ico { width: 22px; height: 22px; }
  .leaf.selected { background: #d9d9d9; }
  .new { align-self: flex-start; margin-left: 2px; font: bold 12px/16px "DejaVu Sans", sans-serif; text-shadow: 1px 1px #ffde00, -1px -1px #ffde00, 1px -1px #ffde00, -1px 1px #ffde00, 2px 0 #ffde00, -2px 0 #ffde00; }

  main { display: flex; flex-direction: column; flex: 1; min-width: 0; }
  .line { display: flex; gap: 3px; height: 38px; margin: 0 0 3px 2px; flex: none; }
  .line.tall { height: 45px; margin-bottom: 0; }
  .line.foot { margin-bottom: 3px; }
  .rest { width: 19px; }
  .canvas { display: block; flex: 1; width: 100%; min-height: 0; background: #000; }
  .green { fill: none; stroke: #008a00; stroke-width: 1; }
  .red { fill: none; stroke: #f00; stroke-width: 1.5; }
  .boxes { fill: none; stroke: #909090; }
  .tiny { fill: #999; font: 5px "Liberation Sans", sans-serif; }
  .cad { fill: #c4c4c4; text-anchor: middle; font: 23px "Liberation Sans", sans-serif; }
  .axis { font-weight: bold; font-size: 21px; }
  .ucs { font: 300 20px Lato, sans-serif; }

  .values { color: #808080; padding-right: 6px; }
  .values .sep { margin-left: 6px; }
  .values .combo { color: #000; }
  .values label { margin: 0 6px 0 1px; }
  .values span { margin-left: 2px; }
  .values .next { margin-left: 8px; }
  .values input[type='checkbox'] { appearance: none; width: 18px; height: 18px; margin: 0 12px 0 1px; border: 2px solid #c4c4c4; background: #f6f6f6; }
  .values .turn { color: #000; }
  .spin { display: flex; align-items: center; height: 34px; padding-right: 8px; border: 2px solid #888; background: #f4f4f4; }
  .spin input { width: 0; flex: 1; border: 0; padding: 0 15px 0 0; background: none; color: #909090; font: inherit; text-align: right; }
  .spin svg { width: 8px; height: 24px; fill: #777; }

  section { position: relative; display: flex; flex: 0 0 262px; min-height: 0; overflow: hidden; background: #f0f0f0; }
  .gutter { width: 20px; padding: 4px 0 0 1px; flex: none; background: radial-gradient(circle at 4px 4px, #c0c0c0 1px, transparent 2px) 2px 0 / 8px 8px; }
  .gutter button { display: block; width: 16px; height: 16px; background: #f0f0f0; }
  .gutter svg { display: block; fill: none; }
  .sheet { display: flex; flex-direction: column; flex: 1; min-width: 0; padding-top: 3px; }
  .spanbar { height: 39px; }
  .scroll { flex: 1; overflow: hidden; background: #fff; border-top: 2px solid #bcbcc4; border-left: 1px solid #bcbcc4; }
  table { table-layout: fixed; width: 1627px; border-collapse: separate; border-spacing: 0; }
  th, td { height: 29px; padding: 0; border: solid #c4c4c4; border-width: 0 1px 1px 0; font-weight: normal; line-height: 20px; white-space: nowrap; overflow: hidden; }
  th { text-align: center; background: linear-gradient(#fff, #efefef); }
  th.upper { padding-right: 122px; }
  th.hot { background: linear-gradient(#fad8a0, #f0bf5e); color: #5a0050; }
  td { padding-left: 3px; font-family: "Liberation Sans", sans-serif; font-size: 16px; }
  tbody th { font-family: "Liberation Sans", sans-serif; font-size: 16px; }
  td.frozen { border-right: 2px solid #000; }
  .current td { background: #a6c9f0; }
  .current th { background: #ffd28c; color: #6a0050; }
  .current td.cell { position: relative; overflow: visible; background: #8cbbec; outline: 4px solid #000; outline-offset: -2px; }
  /* fill handle */
  .cell::after { content: ''; position: absolute; right: -4px; bottom: -5px; width: 6px; height: 6px; background: #000; border: solid #fff; border-width: 1px 0 0 1px; }
  .rebar { width: 14px; height: 16px; margin: 0 2px; vertical-align: -3px; fill: none; stroke: #000; stroke-width: 1.3; }
  .marks { position: absolute; left: 1px; top: 0; width: 1400px; height: 240px; pointer-events: none; }
</style>
